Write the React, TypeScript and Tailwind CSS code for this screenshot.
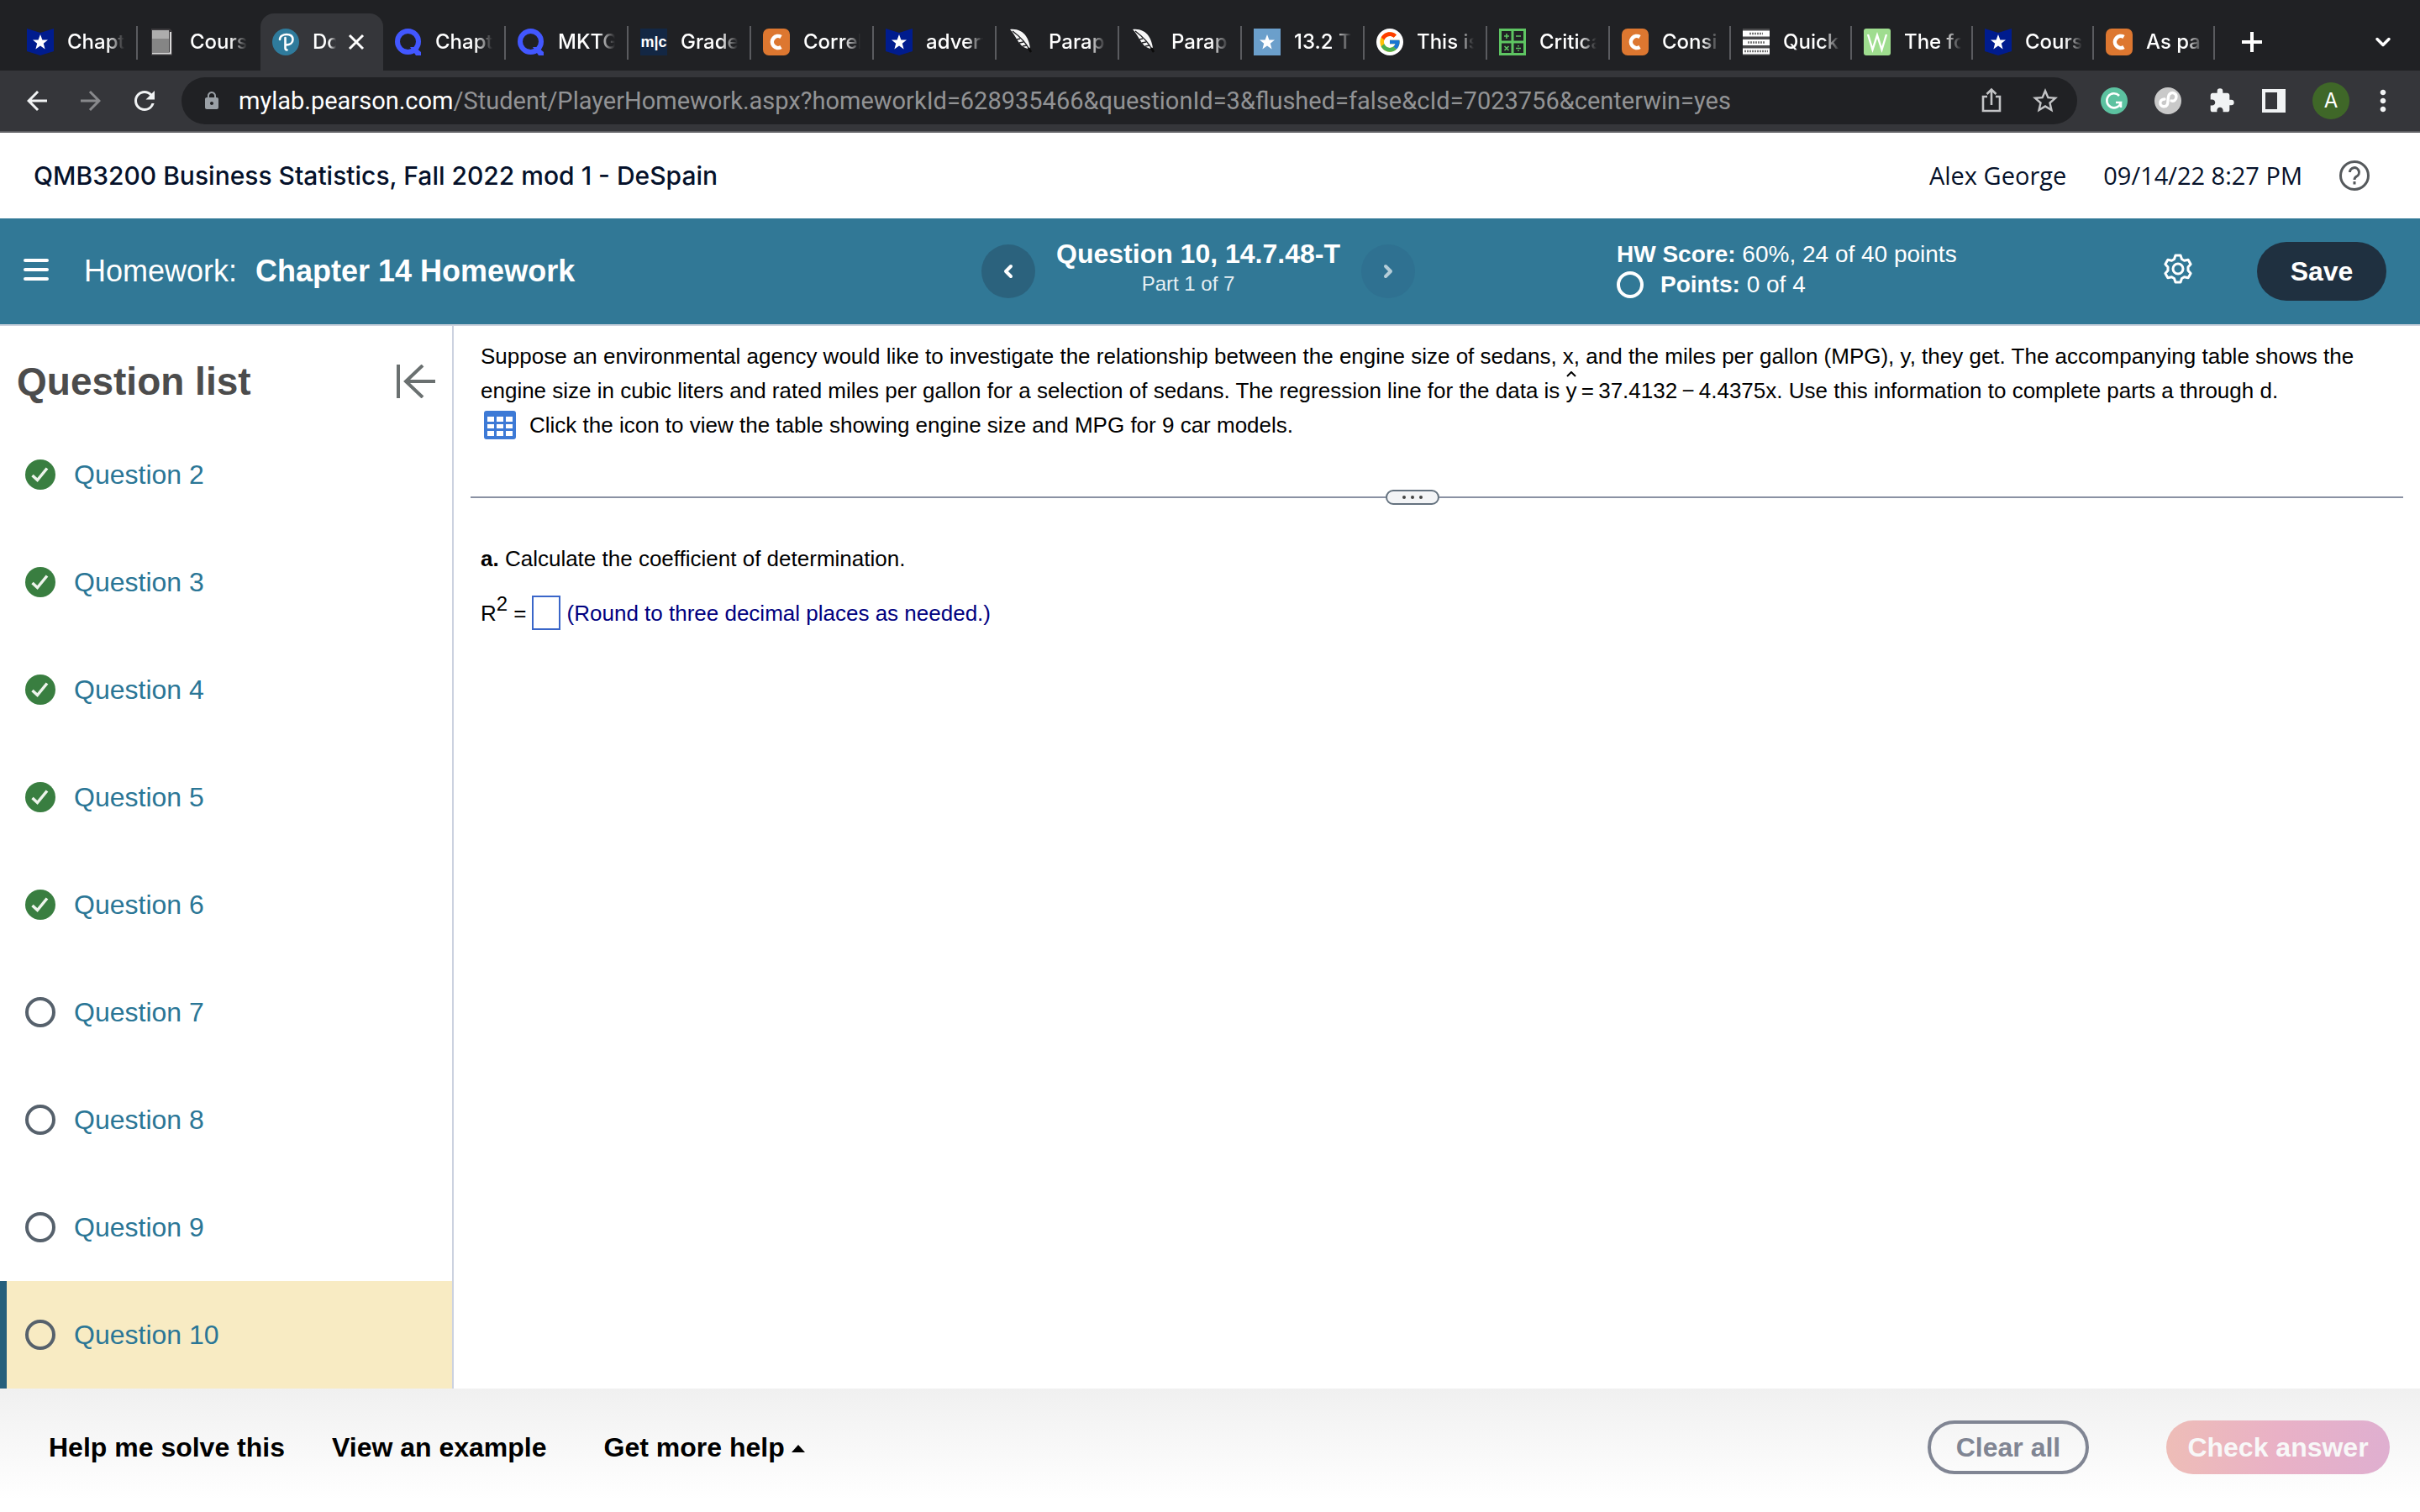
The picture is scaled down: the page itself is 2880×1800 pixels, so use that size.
import React from "react";
import clsx from "clsx";
import { ChevronDown, ChevronLeft, ChevronRight } from "lucide-react";
import { MdArrowBack, MdArrowForward, MdExtension, MdLock, MdMoreVert, MdRefresh, MdStarBorder } from "react-icons/md";
import { FcGoogle } from "react-icons/fc";

type IconName =
  | "badge"
  | "book"
  | "pearson"
  | "quizlet"
  | "mic"
  | "chegg"
  | "quill"
  | "star"
  | "google"
  | "calc"
  | "stats"
  | "word";

type Tab = {
  title: string;
  icon: IconName;
  active?: boolean;
};

const tabs: Tab[] = [
  { title: "Chapt", icon: "badge" },
  { title: "Cours", icon: "book" },
  { title: "Do", icon: "pearson", active: true },
  { title: "Chapt", icon: "quizlet" },
  { title: "MKTG", icon: "quizlet" },
  { title: "Grade", icon: "mic" },
  { title: "Correl", icon: "chegg" },
  { title: "advert", icon: "badge" },
  { title: "Parap", icon: "quill" },
  { title: "Parap", icon: "quill" },
  { title: "13.2 T", icon: "star" },
  { title: "This is", icon: "google" },
  { title: "Critica", icon: "calc" },
  { title: "Consi", icon: "chegg" },
  { title: "Quick", icon: "stats" },
  { title: "The fo", icon: "word" },
  { title: "Cours", icon: "badge" },
  { title: "As pa", icon: "chegg" },
];

const questions = [
  { id: 2, done: true },
  { id: 3, done: true },
  { id: 4, done: true },
  { id: 5, done: true },
  { id: 6, done: true },
  { id: 7, done: false },
  { id: 8, done: false },
  { id: 9, done: false },
  { id: 10, done: false },
];

const currentQuestion = 10;

const starPoints = "16,7 18.4,13.4 25,13.6 19.8,17.8 21.6,24.4 16,20.6 10.4,24.4 12.2,17.8 7,13.6 13.6,13.4";

const Favicon: React.FC<{ name: IconName }> = ({ name }) => {
  if (name === "google") {
    return (
      <span className="flex size-8 shrink-0 items-center justify-center rounded-full bg-white">
        <FcGoogle className="size-7" />
      </span>
    );
  }

  return (
    <svg viewBox="0 0 32 32" className="size-8 shrink-0" aria-hidden="true">
      {name === "badge" && (
        <>
          <path d="M0 0l16 5L32 0v27l-16 5-16-5z" fill="#001c8e" />
          <polygon points={starPoints} fill="#fff" />
        </>
      )}
      {name === "star" && (
        <>
          <rect width="32" height="32" fill="#6b9fcb" />
          <polygon points={starPoints} fill="#fff" />
        </>
      )}
      {name === "book" && (
        <>
          <path d="M2 0h22l3 3v29H2z" fill="#3c3a3d" />
          <path d="M3 2h20v26H3z" fill="#858585" />
          <path d="M3 2h20v10H3z" fill="#adadad" />
          <path d="M3 29.500h22V4" fill="none" stroke="#d8d8d8" strokeWidth="2" />
        </>
      )}
      {name === "pearson" && (
        <>
          <circle cx="16" cy="16" r="16" fill="#2f7b9c" />
          <path
            d="M9 13c0-4 4-6 8-6 4.500 0 7.500 2 7.500 6s-3.500 6.500-8 6.500M15.500 11v12c0 1.500.5 2.500 2 2.500"
            fill="none"
            stroke="#fff"
            strokeWidth="2.600"
            strokeLinecap="round"
          />
        </>
      )}
      {name === "quizlet" && (
        <>
          <circle cx="15.500" cy="15.500" r="12.500" fill="none" stroke="#4257ff" strokeWidth="6" />
          <path d="M18 22h6l7 6v4h-6z" fill="#4257ff" />
        </>
      )}
      {name === "mic" && (
        <>
          <rect width="32" height="32" fill="#132744" />
          <text x="16" y="22" textAnchor="middle" fontSize="18" fontWeight="bold" fontFamily="Liberation Sans, sans-serif" fill="#fff">
            m|c
          </text>
        </>
      )}
      {name === "chegg" && (
        <>
          <rect width="32" height="32" rx="7" fill="#dd7730" />
          <path d="M21.500 10a7 7 0 1 0 0 12" fill="none" stroke="#fff" strokeWidth="4.500" />
        </>
      )}
      {name === "quill" && (
        <>
          <path d="M2 1c8-1 15 2 19 8 3 4 4 9 5 14l-3 1c-4-1-7-3-10-7C9 12 7 6 2 1z" fill="#f7f7f7" />
          <path d="M5 3c8 6 15 12 20 22M10 13l4-1M13 17l5-1M17 21l5-1" fill="none" stroke="#202124" strokeWidth="1.400" />
          <path d="M24 23l3 5" stroke="#0b0b0b" strokeWidth="2.500" />
        </>
      )}
      {name === "calc" && (
        <>
          <rect width="32" height="32" fill="#5ec562" />
          <path d="M3 3h11.500v11.500H3zM17.500 3H29v11.500H17.500zM3 17.500h11.500V29H3zM17.500 17.500H29V29H17.500z" fill="#202124" />
          <path
            d="M9 6v6M6 9h6M20 9h6M6.500 21l5 5M11.500 21l-5 5M20 23.500h6M23 20v1.500M23 25.500V27"
            stroke="#5ec562"
            strokeWidth="1.600"
          />
        </>
      )}
      {name === "stats" && (
        <>
          <rect width="32" height="32" fill="#4a4a4c" />
          <path d="M0 2.500h32v7H0zM0 13h32v7H0zM0 23.500h32v7H0z" fill="#fff" />
          <path d="M8 6h16M6 16.500h20M2 27h28" stroke="#777" strokeWidth="2.500" strokeDasharray="2 1" />
        </>
      )}
      {name === "word" && (
        <>
          <rect width="32" height="32" rx="3" fill="#9fdd8f" />
          <path d="M5 7l5.500 18L16 8l5.500 17L27 7" fill="none" stroke="#fff" strokeWidth="2.400" />
        </>
      )}
    </svg>
  );
};

const BrowserTab: React.FC<{ tab: Tab; narrow: boolean; divider: boolean }> = ({ tab, narrow, divider }) => (
  <div
    className={clsx(
      "relative flex h-[68px] items-center pl-[14px]",
      narrow ? "w-[144px]" : "w-[146px]",
      tab.active && "rounded-t-2xl bg-[#35363a]"
    )}
  >
    <button type="button" className="flex min-w-0 items-center gap-4 text-left">
      <Favicon name={tab.icon} />
      <span
        className={clsx(
          "overflow-hidden mask-r-from-70% text-[24px] leading-8 font-medium whitespace-nowrap text-white",
          tab.active ? "w-7" : "w-[68px]"
        )}
      >
        {tab.title}
      </span>
    </button>
    {tab.active && (
      <button type="button" aria-label="Close tab" className="ml-[14px] text-white">
        <svg viewBox="0 0 20 20" className="size-5" stroke="currentColor" strokeWidth="3">
          <path d="M2 2l16 16M18 2L2 18" />
        </svg>
      </button>
    )}
    {divider && <span className="absolute top-[15px] right-0 h-10 w-[2px] bg-[#5a5b5f]" />}
  </div>
);

const TabStrip: React.FC = () => (
  <div className="flex h-[84px] items-end bg-[#202124] pl-[18px]">
    {tabs.map((tab, index) => (
      <BrowserTab key={index} tab={tab} narrow={index > 12} divider={index !== 1 && index !== 2} />
    ))}
    <button type="button" aria-label="New tab" className="mb-[22px] ml-8 text-white">
      <svg viewBox="0 0 24 24" className="size-6" stroke="currentColor" strokeWidth="4">
        <path d="M12 0v24M0 12h24" />
      </svg>
    </button>
    <button type="button" aria-label="Search tabs" className="mr-[30px] mb-[20px] ml-auto text-white">
      <ChevronDown className="size-7" strokeWidth={3} />
    </button>
  </div>
);

const Toolbar: React.FC = () => (
  <div className="flex h-[74px] items-center border-b-2 border-[#5d5e62] bg-[#35363a] pr-6 pl-[26px] text-[#f1f3f4]">
    <div className="flex w-[190px] items-center gap-7">
      <button type="button" aria-label="Back">
        <MdArrowBack className="size-9" />
      </button>
      <button type="button" aria-label="Forward" className="text-[#88898c]">
        <MdArrowForward className="size-9" />
      </button>
      <button type="button" aria-label="Reload">
        <MdRefresh className="size-9" />
      </button>
    </div>
    <div className="flex h-14 flex-1 items-center rounded-full bg-[#202124] pr-5 pl-6">
      <MdLock className="size-6 text-[#9aa0a6]" />
      <p className="ml-5 flex-1 font-['Roboto'] text-[29px] leading-9 whitespace-nowrap text-[#929395]">
        <span className="text-white">mylab.pearson.com</span>
        /Student/PlayerHomework.aspx?homeworkId=628935466&questionId=3&flushed=false&cId=7023756&centerwin=yes
      </p>
      <div className="flex items-center gap-[30px] text-[#c3c4c6]">
        <button type="button" aria-label="Share">
          <svg viewBox="0 0 32 32" className="size-8" fill="none" stroke="currentColor" strokeWidth="2.600">
            <path d="M11 11H6v17h20V11h-5M16 21V3M10.500 8L16 2.500 21.500 8" />
          </svg>
        </button>
        <button type="button" aria-label="Bookmark this tab">
          <MdStarBorder className="size-9" />
        </button>
      </div>
    </div>
    <div className="ml-7 flex items-center gap-8">
      <button type="button" aria-label="Grammarly">
        <svg viewBox="0 0 32 32" className="size-8">
          <circle cx="16" cy="16" r="16" fill="#5cc2a0" />
          <path d="M22 10a8.500 8.500 0 1 0 2 8h-6M24 17v7" fill="none" stroke="#fff" strokeWidth="2.600" />
        </svg>
      </button>
      <button type="button" aria-label="Extension">
        <svg viewBox="0 0 32 32" className="size-8">
          <circle cx="16" cy="16" r="16" fill="#c9c9c9" />
          <path
            d="M12 14c-4 0-6 3-5 6s6 4 8 1 0-10 3-13 8-1 8 3-3 6-6 5"
            fill="none"
            stroke="#fff"
            strokeWidth="3.400"
            strokeLinecap="round"
          />
        </svg>
      </button>
      <button type="button" aria-label="Extensions">
        <MdExtension className="size-8" />
      </button>
      <button type="button" aria-label="Side panel">
        <svg viewBox="0 0 28 28" className="size-7">
          <path d="M0 0h28v28H0zM4 4v20h14V4z" fill="currentColor" fillRule="evenodd" />
        </svg>
      </button>
      <button type="button" aria-label="Profile" className="size-11 rounded-full bg-[#3f6728] text-[24px] leading-none text-white">
        A
      </button>
      <button type="button" aria-label="Menu" className="-ml-3">
        <MdMoreVert className="size-10" />
      </button>
    </div>
  </div>
);

const CourseHeader: React.FC = () => (
  <header className="flex h-[102px] items-center justify-between bg-white pr-[60px] pl-10 text-[#05112a]">
    <h1 className="font-['Inter'] text-[30px] leading-10 font-medium">
      QMB3200 Business Statistics, Fall 2022 mod 1 - DeSpain
    </h1>
    <div className="flex items-center gap-11 font-['Open_Sans'] text-[29px] leading-10">
      <span>Alex George</span>
      <time>09/14/22 8:27 PM</time>
      <button type="button" aria-label="Help" className="text-[#55595c]">
        <svg viewBox="0 0 36 36" className="size-9" fill="none" stroke="currentColor" strokeWidth="3">
          <circle cx="18" cy="18" r="16.500" />
          <path d="M12.500 14a5.500 5.500 0 1 1 8 5c-1.800 1-2.500 1.800-2.500 4M18 25v3.500" />
        </svg>
      </button>
    </div>
  </header>
);

const HomeworkBar: React.FC = () => (
  <div className="grid h-32 grid-cols-[1168px_516px_1fr] items-center border-b-2 border-[#ccd2dd] bg-[#317896] text-white">
    <div className="flex items-center pl-7">
      <button type="button" aria-label="Open menu" className="mb-1">
        <svg viewBox="0 0 30 28" className="h-7 w-[30px]" stroke="currentColor" strokeWidth="4" strokeLinecap="round">
          <path d="M2 3h26M2 14h26M2 25h26" />
        </svg>
      </button>
      <p className="ml-[42px] text-[36px] leading-10">
        Homework:
        <strong className="ml-[22px]">Chapter 14 Homework</strong>
      </p>
    </div>
    <nav className="flex items-center justify-between" aria-label="Question navigation">
      <button
        type="button"
        aria-label="Previous question"
        className="flex size-16 items-center justify-center rounded-full bg-[#2b627d]"
      >
        <ChevronLeft className="size-6" strokeWidth={4} />
      </button>
      <div className="pb-[6px] text-center">
        <h2 className="text-[32px] leading-9 font-bold">Question 10, 14.7.48-T</h2>
        <p className="pr-6 text-[24px] leading-9 text-[#e6eff3]">Part 1 of 7</p>
      </div>
      <button
        type="button"
        aria-label="Next question"
        disabled
        className="flex size-16 items-center justify-center rounded-full bg-[#2f7191] text-[#b5cdd8]"
      >
        <ChevronRight className="size-6" strokeWidth={4} />
      </button>
    </nav>
    <div className="flex items-center pr-10 pl-60">
      <div className="pb-1 text-[28px] leading-9">
        <p>
          <b>HW Score:</b> 60%, 24 of 40 points
        </p>
        <p className="flex items-center gap-5">
          <span className="size-8 rounded-full border-4 border-white" />
          <span>
            <b>Points:</b> 0 of 4
          </span>
        </p>
      </div>
      <button type="button" aria-label="Settings" className="mr-[76px] mb-[6px] ml-auto">
        <svg viewBox="0 0 36 36" className="size-9" fill="none" stroke="currentColor" strokeWidth="3" strokeLinejoin="round">
          <path d="M15 2h6l1.500 4.500 3 1.700 4.600-1 3 5.200-3.100 3.600v4l3.100 3.600-3 5.200-4.600-1-3 1.700L21 34h-6l-1.500-4.500-3-1.700-4.600 1-3-5.200L6 20v-4l-3.100-3.600 3-5.200 4.600 1 3-1.700z" />
          <circle cx="18" cy="18" r="6" />
        </svg>
      </button>
      <button type="button" className="h-[70px] w-[154px] rounded-full bg-[#1f3040] text-[32px] font-bold">
        Save
      </button>
    </div>
  </div>
);

const QuestionStatus: React.FC<{ done: boolean }> = ({ done }) =>
  done ? (
    <svg viewBox="0 0 36 36" className="size-9" role="img" aria-label="Complete">
      <circle cx="18" cy="18" r="18" fill="#397e40" />
      <path d="M8.500 19l6 5.500L26 10.500" fill="none" stroke="#eef4ec" strokeWidth="3.500" />
    </svg>
  ) : (
    <span className="size-9 rounded-full border-4 border-[#56616c]" />
  );

const QuestionList: React.FC = () => (
  <aside className="flex w-[540px] shrink-0 flex-col border-r-2 border-[#ccd2e0]">
    <div className="flex h-[113px] items-center justify-between pt-[18px] pr-5 pl-5">
      <h2 className="text-[46px] leading-[56px] font-bold text-[#4c4c4c]">Question list</h2>
      <button type="button" aria-label="Collapse question list" className="text-[#6a7070]">
        <svg viewBox="0 0 46 40" className="h-10 w-[46px]" fill="none" stroke="currentColor" strokeWidth="4">
          <path d="M2 0v40M46 20H12M31 1L11 20l20 19" />
        </svg>
      </button>
    </div>
    <ul>
      {questions.map(({ id, done }) => (
        <li key={id}>
          <a
            href={`#question-${id}`}
            className={clsx(
              "flex h-32 items-center gap-[22px] border-l-8 pl-[22px] text-[32px] text-[#2a7696]",
              id === currentQuestion ? "border-[#255f7c] bg-[#f8ebc3]" : "border-transparent"
            )}
          >
            <QuestionStatus done={done} />
            Question {id}
          </a>
        </li>
      ))}
    </ul>
  </aside>
);

const TableIcon: React.FC = () => (
  <svg viewBox="0 0 38 34" className="h-[34px] w-[38px]" aria-hidden="true">
    <rect width="38" height="34" rx="3" fill="#3d7ad6" />
    <path
      d="M4 7h8v6H4zM15 7h8v6h-8zM26 7h8v6h-8zM4 16h8v5H4zM15 16h8v5h-8zM26 16h8v5h-8zM4 24h8v6H4zM15 24h8v6h-8zM26 24h8v6h-8z"
      fill="#fff"
    />
  </svg>
);

const Exercise: React.FC = () => (
  <main className="min-w-0 flex-1 pt-4 pr-5 pl-5 text-[26px] text-black">
    <div className="pl-3 leading-[41px]">
      <p>
        Suppose an environmental agency would like to investigate the relationship between the engine size of sedans, x,
        and the miles per gallon (MPG), y, they get. The accompanying table shows the engine size in cubic liters and
        rated miles per gallon for a selection of sedans. The regression line for the data is{" "}
        <span className="relative">
          y
          <svg
            viewBox="0 0 12 7"
            className="absolute -top-2 left-0 h-[7px] w-3"
            fill="none"
            stroke="currentColor"
            strokeWidth="2"
            aria-hidden="true"
          >
            <path d="M1 6l5-5 5 5" />
          </svg>
        </span>
        {"\u2009=\u200937.4132\u2009−\u20094.4375x. Use this information to complete parts a through d."}
      </p>
      <button type="button" className="flex h-10 items-center gap-4 pl-1">
        <TableIcon />
        Click the icon to view the table showing engine size and MPG for 9 car models.
      </button>
    </div>

    <div className="mt-[57px] flex items-center">
      <span className="h-[2px] flex-19 bg-[#8a91a3]" />
      <button
        type="button"
        aria-label="Resize panels"
        className="flex h-[18px] w-16 shrink-0 items-center justify-center gap-[6px] rounded-full border-2 border-[#64727f] bg-[#f3f4f6]"
      >
        <span className="size-1 rounded-full bg-[#444]" />
        <span className="size-1 rounded-full bg-[#444]" />
        <span className="size-1 rounded-full bg-[#444]" />
      </button>
      <span className="h-[2px] flex-20 bg-[#8a91a3]" />
    </div>

    <form className="mt-11 pl-3">
      <p className="leading-10">
        <b>a.</b> Calculate the coefficient of determination.
      </p>
      <div className="mt-6 flex items-center leading-10">
        <label htmlFor="r-squared">
          R<sup className="text-[24px]">2</sup> =
        </label>
        <input id="r-squared" type="text" className="mr-2 ml-[6px] h-[41px] w-[34px] border-2 border-[#3a66c9] outline-none" />
        <span className="text-[#00007f]">(Round to three decimal places as needed.)</span>
      </div>
    </form>
  </main>
);

const Footer: React.FC = () => (
  <footer className="flex h-[147px] items-center bg-linear-to-b from-[#f0f0f0] to-white to-90% pr-9 pb-2 pl-[58px] text-[32px] font-bold text-black">
    <button type="button">Help me solve this</button>
    <button type="button" className="ml-14">
      View an example
    </button>
    <button type="button" className="ml-[68px] flex items-center gap-2">
      Get more help
      <svg viewBox="0 0 16 9" className="mt-1 h-[9px] w-4" aria-hidden="true">
        <path d="M8 0l8 9H0z" fill="currentColor" />
      </svg>
    </button>
    <button type="button" className="ml-auto h-16 w-48 rounded-full border-4 border-[#808593] text-[#808593]">
      Clear all
    </button>
    <button
      type="button"
      className="ml-[92px] h-16 w-[266px] rounded-full bg-linear-to-r from-[#eebdb7] via-[#e9b1c6] to-[#dfafd0] text-[#f8f8f8]"
    >
      Check answer
    </button>
  </footer>
);

export default function App() {
  return (
    <div className="flex min-h-screen flex-col bg-white font-['Liberation_Sans',Arial,sans-serif]">
      <div className="font-['Inter',sans-serif]">
        <TabStrip />
        <Toolbar />
      </div>
      <CourseHeader />
      <HomeworkBar />
      <div className="flex flex-1">
        <QuestionList />
        <Exercise />
      </div>
      <Footer />
    </div>
  );
}
